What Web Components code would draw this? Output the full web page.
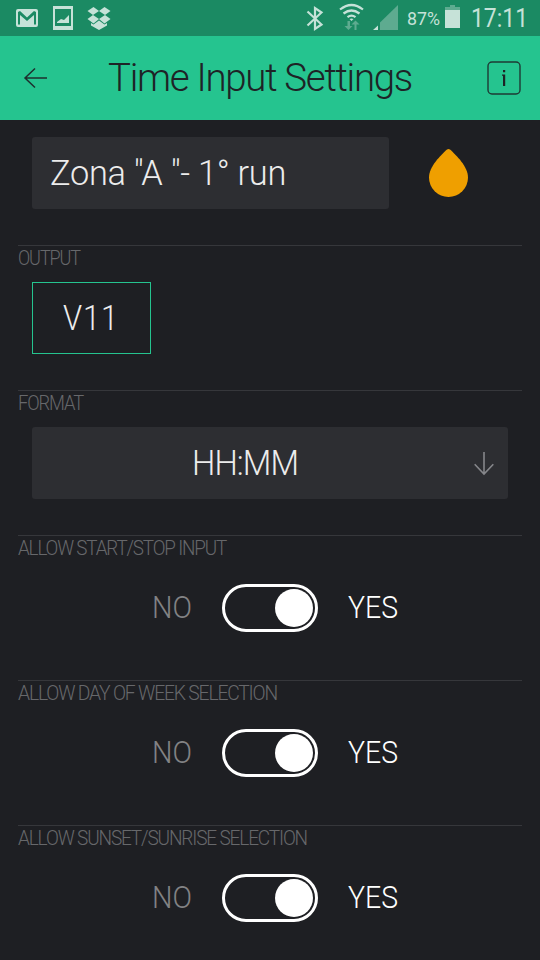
<!DOCTYPE html>
<html lang="en">
<head>
<meta charset="utf-8">
<title>Time Input Settings</title>
<style>
html,body{margin:0;height:100%;background:#1e1f23;overflow:hidden}
body{font-family:Roboto,"Liberation Sans",sans-serif;font-weight:300}
</style>
</head>
<body>
<settings-screen></settings-screen>
<script>
const define = (name, html, setup) => customElements.define(name, class extends HTMLElement {
  connectedCallback() {
    if (this.shadowRoot) return;
    const t = document.createElement('template');
    t.innerHTML = html;
    this.attachShadow({mode: 'open'}).append(t.content.cloneNode(true));
    if (setup) setup(this, this.shadowRoot);
  }
});

// A single line of text, condensed or widened to the width given in "fit".
define('fit-text', `<style>
:host{display:block;flex:none;white-space:pre;line-height:1}
span{display:inline-block;transform-origin:0 50%}
</style><span></span>`, (el, root) => {
  const s = root.querySelector('span');
  s.textContent = el.getAttribute('text');
  const w = +el.getAttribute('fit');
  el.style.width = w + 'px';
  s.style.transform = 'scaleX(' + w / s.getBoundingClientRect().width + ')';
});

define('status-bar', `<style>
:host{display:flex;height:36px;background:#1b8a63;color:#c6e2d8;font-weight:400;box-sizing:border-box}
svg{display:block;flex:none}
.t{flex:none}
.p{font-size:19px;margin:9px 0 0 9px}
.c{font-size:25px;margin:6px 0 0 11px}
</style>
<svg width="398" height="36" viewBox="0 0 398 36" fill="#c6e2d8">
<path fill-rule="evenodd" d="M18 9h18q2 0 2 2v14q0 2-2 2H18q-2 0-2-2V11q0-2 2-2zM18 12v12.500h2V15l7 6 7-6v9.500h2V12l-2-1-7 6.500L20 11z"/>
<path fill-rule="evenodd" d="M53 6h20v24H53zM55 9v17h16V9z"/><path d="M57 22l4-3 3 1 5-5v8H57z"/>
<path d="M93.500 7l5.500 4-6 4-5.500-4zM104.500 7l6 4-5.500 4-6-4zM93 15l6 4-5.500 4.500-6-4.500zM105 15l5.500 4-6 4.500-5.500-4.500zM99 20.500l5.500 4 2.500-1.500v2.500L99 30l-8-4.500V23l2.500 1.500z"/>
<path d="M307.500 11.500l14 13-6.500 4.500V8l6.500 4.500-14 13" fill="none" stroke="#c6e2d8" stroke-width="2.200"/>
<g fill="none" stroke="#c6e2d8" stroke-width="2.200"><path d="M340 9.500q11.500-9 23 0M343.500 13.500q8-6 16 0M347.500 17.200q4-3 8 0"/></g>
<path d="M349.500 19q2-1.200 4 0l-2 2z"/>
<path fill="#5eab90" d="M347.500 21h2.500v5h2.500l-4 4-4-4h3zM354.500 30v-5.500h-3l4-4 4 4h-3V30z"/>
<path fill="#5eab90" d="M398 5v25h-18V22.500z"/><path d="M378 25.500V30h-5z"/>
</svg>
<fit-text class="t p" text="87%" fit="33"></fit-text>
<svg width="20" height="36" viewBox="0 0 20 36"><path fill="#5eab90" d="M5 10V7h5V5h5v2h5v3z"/><path fill="#c6e2d8" d="M5 10h15v18H5z"/></svg>
<fit-text class="t c" text="17:11" fit="57"></fit-text>`);

define('title-bar', `<style>
:host{display:flex;height:84px;background:#25c48f;color:#1e2326;box-sizing:border-box}
svg{display:block;flex:none}
fit-text{font-size:39px;letter-spacing:-1.3px;margin:23px 0 0 59px}
.i{margin:25px 0 0 75px}
</style>
<svg width="49" height="84" viewBox="0 0 49 84" fill="none" stroke="#1e2f2e" stroke-width="1.500"><path d="M47 42H25M35 32.500L25 42l10 9.500"/></svg>
<fit-text text="Time Input Settings" fit="304"></fit-text>
<svg class="i" width="34" height="34" viewBox="0 0 34 34"><rect x="1" y="1" width="32" height="32" rx="4" fill="none" stroke="#1e3a34" stroke-width="1.400"/><path fill="#1e2326" d="M16 9h2.200v2.200H16zM16 13.500h2.200V25H16zM15 13.500h2v1.200h-2z"/></svg>`);

define('name-row', `<style>
:host{display:flex;height:125px;box-sizing:border-box;padding:17px 0 0 32px}
.f{width:357px;height:72px;background:#2d2e32;border-radius:3px;box-sizing:border-box;padding:19px 0 0 18px;font-size:35px;letter-spacing:-.3px;color:#ececec}
svg{display:block;margin:11px 0 0 40px}
</style>
<div class="f"><fit-text text='Zona "A "- 1° run' fit="236"></fit-text></div>
<svg width="39" height="50" viewBox="0 0 39 50"><path fill="#ef9f00" d="M18 1.500q1.500-1.200 3 0C27 7 39 18.500 39 29.500A19.500 19.500 0 0 1 0 29.500C0 18.500 12 7 18 1.500z"/></svg>`);

define('setting-section', `<style>
:host{display:block;height:145px;box-sizing:border-box;margin:0 18px;border-top:1px solid #36373b}
fit-text{font-size:19.700px;letter-spacing:-1.2px;color:#67686b;margin-top:3px}
.b{margin:13px 14px 0}
.b ::slotted(*){letter-spacing:normal}
</style><fit-text></fit-text><div class="b"><slot></slot></div>`, (el, root) => {
  const old = root.querySelector('fit-text'), t = document.createElement('fit-text');
  t.setAttribute('text', el.getAttribute('label'));
  t.setAttribute('fit', el.getAttribute('fit'));
  old.replaceWith(t);
});

define('pin-box', `<style>
:host{display:block;width:119px;height:72px;border:1px solid #25c48f;box-sizing:border-box;padding:18px 0 0 30px;font-size:35px;color:#ececec}
fit-text{letter-spacing:1px}
</style><fit-text text="V11" fit="56"></fit-text>`);

define('select-box', `<style>
:host{display:flex;height:72px;background:#2d2e32;border-radius:3px;box-sizing:border-box;color:#ececec}
fit-text{font-size:35px;letter-spacing:-1px;margin:19px 0 0 160px}
svg{display:block;margin:24px 0 0 176px}
</style><fit-text text="HH:MM" fit="106"></fit-text>
<svg width="22" height="26" viewBox="0 0 22 26" fill="none" stroke="#85868a" stroke-width="1.600"><path d="M10 1v22M.7 13.300L10 23l9.300-9.700"/></svg>`);

define('toggle-row', `<style>
:host{display:flex;padding:12px 0 0 120px}
fit-text{font-size:31px;margin-top:8px}
.n{color:#828284}
.y{color:#fff;margin-left:30px}
.s{display:flex;justify-content:flex-end;align-items:center;width:96px;height:48px;border:3px solid #fff;border-radius:24px;box-sizing:border-box;margin-left:30px;padding-right:2px}
.s i{width:38px;height:38px;border-radius:50%;background:#fff}
</style><fit-text class="n" text="NO" fit="40"></fit-text><div class="s"><i></i></div><fit-text class="y" text="YES" fit="50"></fit-text>`);

define('settings-screen', `<style>:host{display:block;width:540px;height:960px;overflow:hidden;background:#1e1f23}</style>
<status-bar></status-bar>
<title-bar></title-bar>
<name-row></name-row>
<setting-section label="OUTPUT" fit="62"><pin-box></pin-box></setting-section>
<setting-section label="FORMAT" fit="65"><select-box></select-box></setting-section>
<setting-section label="ALLOW START/STOP INPUT" fit="208"><toggle-row></toggle-row></setting-section>
<setting-section label="ALLOW DAY OF WEEK SELECTION" fit="259"><toggle-row></toggle-row></setting-section>
<setting-section label="ALLOW SUNSET/SUNRISE SELECTION" fit="289"><toggle-row></toggle-row></setting-section>`);
</script>
</body>
</html>
